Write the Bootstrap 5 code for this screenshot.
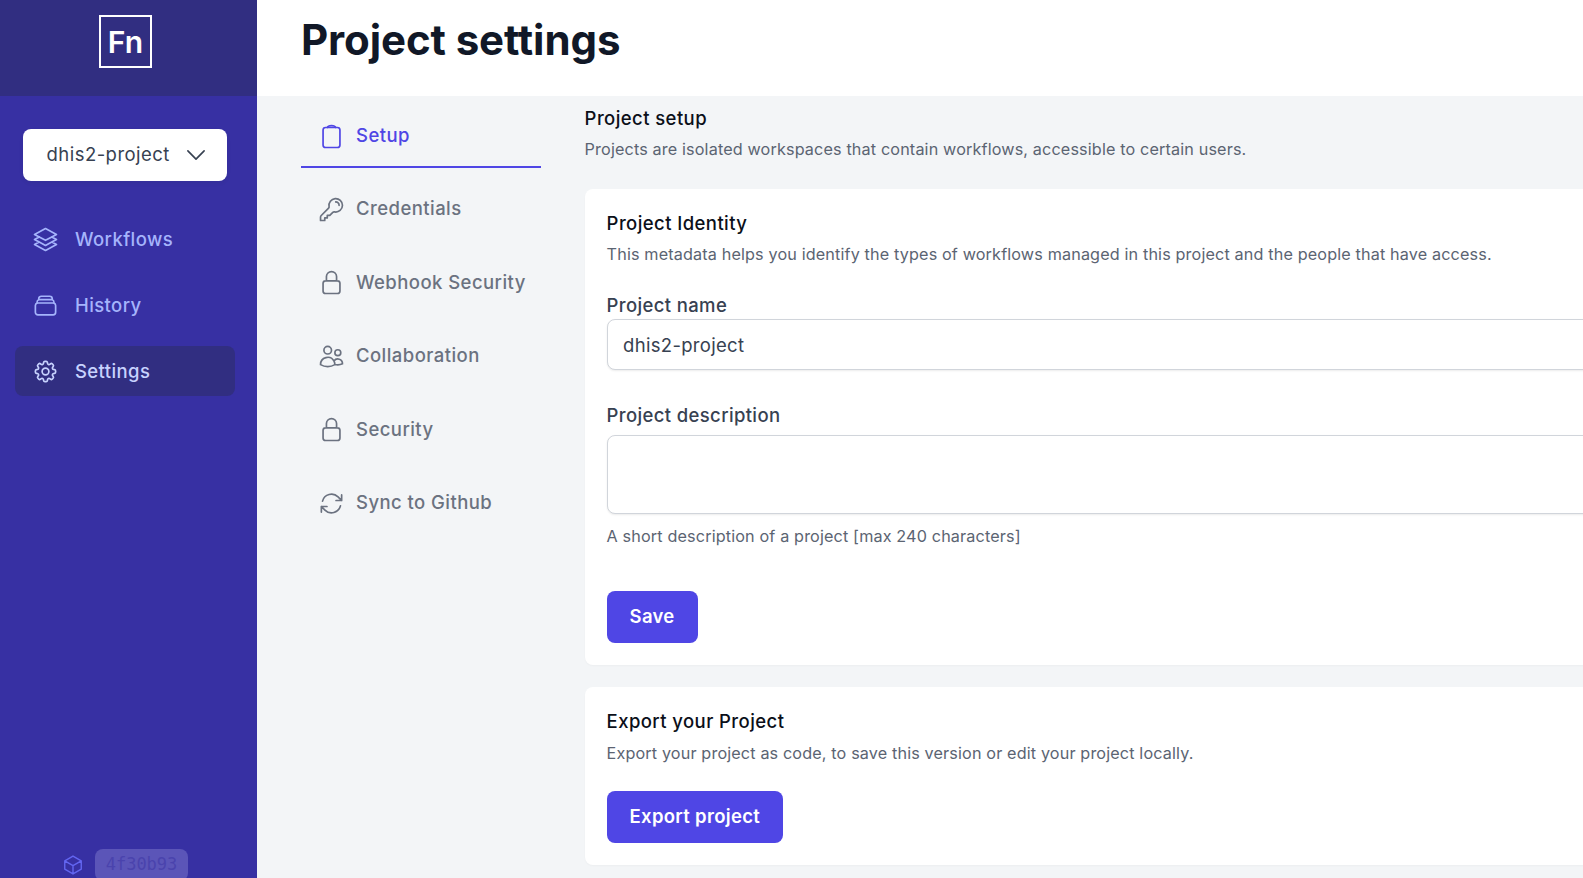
<!DOCTYPE html>
<html lang="en"><head><meta charset="utf-8"><title>Project settings</title>
<link href="https://cdn.jsdelivr.net/npm/bootstrap@5.3.0/dist/css/bootstrap.min.css" rel="stylesheet">
<style>
html,body{height:100%;overflow:hidden}
body{font-family:Inter,"Liberation Sans",sans-serif;background:#f3f5f7;color:#374151}
.app-side{width:257px;height:878px;background:#3730a3;flex:none}
.side-top{height:96px;background:#312e81;padding:15px 0 0 99px}
.logo-box{width:53px;height:53px;border:2px solid #fff;color:#fff;font-weight:600;font-size:30px;line-height:1}
.proj-btn{width:204px;height:52px;margin:33px 0 0 23px;background:#fff;border-radius:8px;color:#374151;font-size:18.5px;letter-spacing:.47px;padding:0 18px 0 23.5px}
.side-nav{margin-top:33px;padding:0 22px 0 15px}
.side-link{height:50px;margin-bottom:16px;padding:1px 0 0 17px;gap:16px;color:#a5b4fc;font-weight:500;font-size:18.5px;letter-spacing:.4px;border-radius:8px;text-decoration:none}
.side-link.on{background:#312e81;color:#c7d2fe}
.side-foot{height:29px;position:absolute;left:0;top:849px;width:257px;padding-left:62px;gap:11px;color:#6366f1}
.sha-pill{background:#5b55b8;color:#4a43ad;border-radius:8px;font-family:"DejaVu Sans Mono","Liberation Mono",monospace;font-size:17px;width:93px;height:32px}
.app-main{min-width:0;flex:1;overflow:hidden}
.top-bar{height:96px;background:#fff;padding:0 0 16px 44px}
.top-bar h1{font-size:42px;font-weight:700;color:#111827;margin:0;letter-spacing:-.1px}
.tab-col{width:240px;flex:none;margin-left:44px;padding-top:3px}
.tab-link{height:73.5px;gap:11px;padding-left:17px;color:#6b7280;font-weight:500;font-size:18.5px;letter-spacing:.44px;text-decoration:none}
.tab-link.on{color:#4f46e5;border-bottom:2px solid #4f46e5;height:69px;padding-top:7px;margin-bottom:4.5px}
.body-col{width:1120px;flex:none;margin-left:43.6px;padding-top:10px}
.sec-head{font-size:18.5px;font-weight:450;color:#0b0f19;line-height:24px;letter-spacing:.42px}
.sec-sub{font-size:16.2px;color:#5b6472;line-height:24px;letter-spacing:.14px}
.white-panel{background:#fff;border-radius:8px;padding:22px;margin-bottom:22px;box-shadow:0 1px 2px rgba(0,0,0,.03)}
.fld-label{font-size:18.5px;font-weight:450;color:#374151;line-height:24px;margin:0;letter-spacing:.36px}
.fld{display:block;width:100%;border:1px solid #d1d5db;border-radius:8px;padding:0 15.5px;font-size:18.5px;letter-spacing:.3px;color:#374151;background:#fff;box-shadow:0 1px 2px rgba(0,0,0,.08);font-family:inherit}
.act-btn{background:#4f46e5;color:#fff;border:0;border-radius:8px;height:52px;padding:0 23px;font-size:18.5px;font-weight:600;letter-spacing:.3px}
.act-btn:hover{background:#4338ca;color:#fff}
svg.ico{fill:none;stroke:currentColor;stroke-width:1.5;stroke-linecap:round;stroke-linejoin:round;flex:none}
</style></head>
<body>
<div class="d-flex">
<aside class="app-side position-relative">
  <div class="side-top"><div class="logo-box d-flex align-items-center justify-content-center">Fn</div></div>
  <div class="proj-btn d-flex align-items-center justify-content-between shadow-sm"><span>dhis2-project</span>
    <svg class="ico" width="26" height="26" viewBox="0 0 24 24"><path d="M19.5 8.25l-7.5 7.5-7.5-7.5"/></svg></div>
  <nav class="side-nav">
    <a class="side-link d-flex align-items-center" href="#"><svg class="ico" width="27" height="27" viewBox="0 0 24 24"><path d="M6.429 9.75L2.25 12l4.179 2.25m0-4.5l5.571 3 5.571-3m-11.142 0L2.25 7.5 12 2.25l9.75 5.25-4.179 2.25m0 0L21.75 12l-4.179 2.25m0 0l4.179 2.25L12 21.75 2.25 16.5l4.179-2.25m11.142 0l-5.571 3-5.571-3"/></svg>Workflows</a>
    <a class="side-link d-flex align-items-center" href="#"><svg class="ico" width="27" height="27" viewBox="0 0 24 24"><path d="M6 6.878V6a2.25 2.25 0 012.25-2.25h7.5A2.25 2.25 0 0118 6v.878m-12 0c.235-.083.487-.128.75-.128h10.5c.263 0 .515.045.75.128m-12 0A2.25 2.25 0 004.5 9v.878m13.5-3A2.25 2.25 0 0119.5 9v.878m0 0a2.246 2.246 0 00-.75-.128H5.25c-.263 0-.515.045-.75.128m15 0A2.25 2.25 0 0121 12v6a2.25 2.25 0 01-2.25 2.25H5.25A2.25 2.25 0 013 18v-6c0-1.007.661-1.859 1.5-2.122"/></svg>History</a>
    <a class="side-link on d-flex align-items-center" href="#"><svg class="ico" width="27" height="27" viewBox="0 0 24 24"><path d="M10.343 3.94c.09-.542.56-.94 1.11-.94h1.093c.55 0 1.02.398 1.11.94l.149.894c.07.424.384.764.78.93.398.164.855.142 1.205-.108l.737-.527a1.125 1.125 0 011.45.12l.773.774c.39.389.44 1.002.12 1.45l-.527.737c-.25.35-.272.806-.107 1.204.165.397.505.71.93.78l.893.15c.543.09.94.56.94 1.109v1.094c0 .55-.397 1.02-.94 1.11l-.893.149c-.425.07-.765.383-.93.78-.165.398-.143.854.107 1.204l.527.738c.32.447.269 1.06-.12 1.45l-.774.773a1.125 1.125 0 01-1.449.12l-.738-.527c-.35-.25-.806-.272-1.203-.107-.397.165-.71.505-.781.929l-.149.894c-.09.542-.56.94-1.11.94h-1.094c-.55 0-1.019-.398-1.11-.94l-.148-.894c-.071-.424-.384-.764-.781-.93-.398-.164-.854-.142-1.204.108l-.738.527c-.447.32-1.06.269-1.45-.12l-.773-.774a1.125 1.125 0 01-.12-1.45l.527-.737c.25-.35.273-.806.108-1.204-.165-.397-.505-.71-.93-.78l-.894-.15c-.542-.09-.94-.56-.94-1.109v-1.094c0-.55.398-1.02.94-1.11l.894-.149c.424-.07.765-.383.93-.78.165-.398.143-.854-.107-1.204l-.527-.738a1.125 1.125 0 01.12-1.45l.773-.773a1.125 1.125 0 011.45-.12l.737.527c.35.25.807.272 1.204.107.397-.165.71-.505.78-.929l.15-.894z"/><path d="M15 12a3 3 0 11-6 0 3 3 0 016 0z"/></svg>Settings</a>
  </nav>
  <div class="side-foot d-flex align-items-start">
    <svg class="ico" width="22" height="22" viewBox="0 0 24 24" style="margin-top:5px"><path d="M21 7.5l-9-5.25L3 7.5m18 0l-9 5.25m9-5.25v9l-9 5.25M3 7.5l9 5.25M3 7.5v9l9 5.25m0-9v9"/></svg>
    <span class="sha-pill d-flex align-items-center justify-content-center">4f30b93</span>
  </div>
</aside>
<div class="app-main">
  <header class="top-bar d-flex align-items-center"><h1>Project settings</h1></header>
  <div class="d-flex">
    <nav class="tab-col">
      <a class="tab-link on d-flex align-items-center" href="#"><svg class="ico" width="27" height="27" viewBox="0 0 24 24"><rect x="4.5" y="4" width="15" height="17.75" rx="2.25"/><path d="M8.3 4c.3-1.1 1.6-1.75 3.7-1.75s3.4.65 3.7 1.75"/></svg>Setup</a>
      <a class="tab-link d-flex align-items-center" href="#"><svg class="ico" width="27" height="27" viewBox="0 0 24 24"><path d="M15.75 5.25a3 3 0 013 3m3 0a6 6 0 01-7.029 5.912c-.563-.097-1.159.026-1.563.43L10.5 17.25H8.25v2.25H6v2.25H2.25v-2.818c0-.597.237-1.17.659-1.591l6.499-6.499c.404-.404.527-1 .43-1.563A6 6 0 1121.75 8.25z"/></svg>Credentials</a>
      <a class="tab-link d-flex align-items-center" href="#"><svg class="ico" width="27" height="27" viewBox="0 0 24 24"><path d="M16.5 10.5V6.75a4.5 4.5 0 10-9 0v3.75m-.75 11.25h10.5a2.25 2.25 0 002.25-2.25v-6.75a2.25 2.25 0 00-2.25-2.25H6.75a2.25 2.25 0 00-2.25 2.25v6.75a2.25 2.25 0 002.25 2.25z"/></svg>Webhook Security</a>
      <a class="tab-link d-flex align-items-center" href="#"><svg class="ico" width="27" height="27" viewBox="0 0 24 24"><path d="M15 19.128a9.38 9.38 0 002.625.372 9.337 9.337 0 004.121-.952 4.125 4.125 0 00-7.533-2.493M15 19.128v-.003c0-1.113-.285-2.16-.786-3.07M15 19.128v.106A12.318 12.318 0 018.624 21c-2.331 0-4.512-.645-6.374-1.766l-.001-.109a6.375 6.375 0 0111.964-3.07M12 6.375a3.375 3.375 0 11-6.75 0 3.375 3.375 0 016.75 0zm8.25 2.25a2.625 2.625 0 11-5.25 0 2.625 2.625 0 015.25 0z"/></svg>Collaboration</a>
      <a class="tab-link d-flex align-items-center" href="#"><svg class="ico" width="27" height="27" viewBox="0 0 24 24"><path d="M16.5 10.5V6.75a4.5 4.5 0 10-9 0v3.75m-.75 11.25h10.5a2.25 2.25 0 002.25-2.25v-6.75a2.25 2.25 0 00-2.25-2.25H6.75a2.25 2.25 0 00-2.25 2.25v6.75a2.25 2.25 0 002.25 2.25z"/></svg>Security</a>
      <a class="tab-link d-flex align-items-center" href="#"><svg class="ico" width="27" height="27" viewBox="0 0 24 24"><path d="M16.023 9.348h4.992v-.001M2.985 19.644v-4.992m0 0h4.992m-4.993 0l3.181 3.183a8.25 8.25 0 0013.803-3.7M4.031 9.865a8.25 8.25 0 0113.803-3.7l3.181 3.182m0-4.991v4.99"/></svg>Sync to Github</a>
    </nav>
    <main class="body-col">
      <div class="sec-head">Project setup</div>
      <div class="sec-sub" style="margin:7px 0 28px">Projects are isolated workspaces that contain workflows, accessible to certain users.</div>
      <section class="white-panel">
        <div class="sec-head">Project Identity</div>
        <div class="sec-sub" style="margin-top:7px">This metadata helps you identify the types of workflows managed in this project and the people that have access.</div>
        <label class="fld-label" style="margin-top:27px">Project name</label>
        <input class="fld" style="height:51px;margin-top:1px" value="dhis2-project">
        <label class="fld-label" style="margin-top:33px">Project description</label>
        <textarea class="fld" style="height:79px;margin-top:7px;resize:none"></textarea>
        <div class="sec-sub" style="margin-top:10px">A short description of a project [max 240 characters]</div>
        <button class="btn act-btn" style="margin-top:43px">Save</button>
      </section>
      <section class="white-panel">
        <div class="sec-head">Export your Project</div>
        <div class="sec-sub" style="margin-top:8px">Export your project as code, to save this version or edit your project locally.</div>
        <button class="btn act-btn" style="margin-top:26px">Export project</button>
      </section>
    </main>
  </div>
</div>
</div>
<script src="https://cdn.jsdelivr.net/npm/bootstrap@5.3.0/dist/js/bootstrap.bundle.min.js"></script>
</body></html>
